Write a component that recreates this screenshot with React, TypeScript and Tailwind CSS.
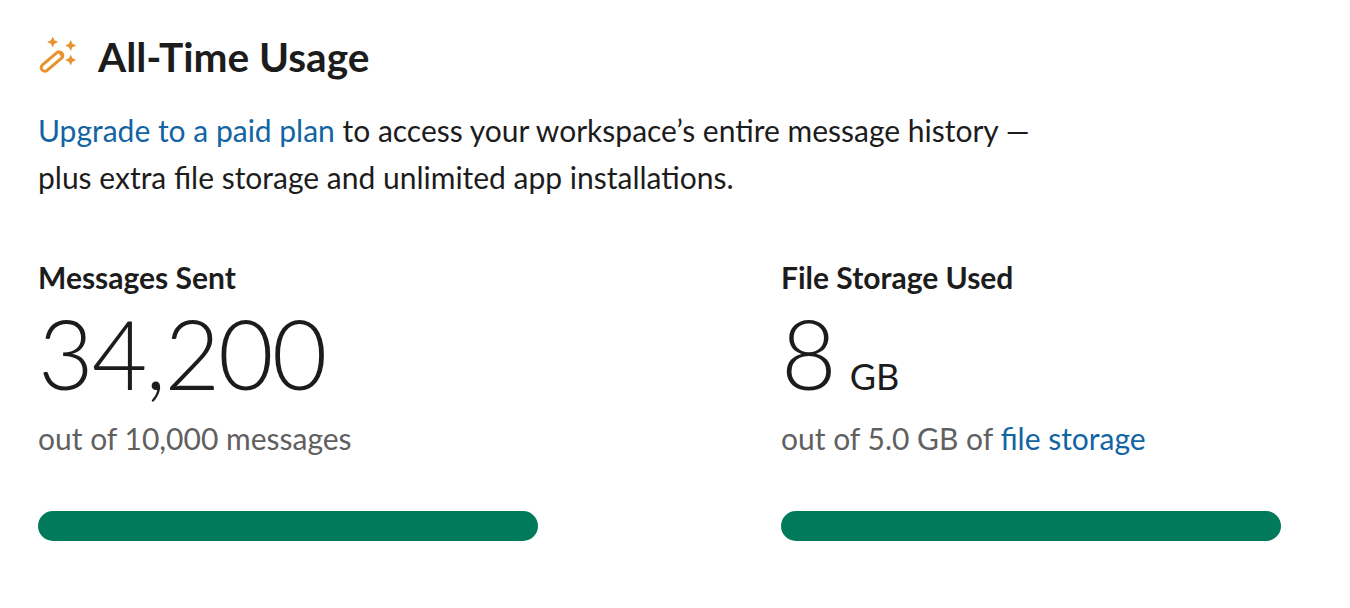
import * as React from 'react'

function WandIcon() {
  return (
    <svg width="40" height="40" viewBox="0 0 40 40" fill="none" className="shrink-0">
      <rect x="-3.6" y="-13" width="7.2" height="26" rx="3.6" transform="translate(14 24.5) rotate(50)" stroke="#e8912d" strokeWidth="3" />
      <path d="M21.5 16 L25.5 20.5" stroke="#e8912d" strokeWidth="2.4" />
      <g fill="#e8912d">
        <path d="M14.7 -0.5 L16.4 3.3 L20.2 5 L16.4 6.7 L14.7 10.5 L13 6.7 L9.2 5 L13 3.3 Z" />
        <path d="M32.7 3 L34.4 6.8 L38.2 8.5 L34.4 10.2 L32.7 14 L31 10.2 L27.2 8.5 L31 6.8 Z" />
        <path d="M32.7 17.5 L34.4 21.3 L38.2 23 L34.4 24.7 L32.7 28.5 L31 24.7 L27.2 23 L31 21.3 Z" />
      </g>
    </svg>
  )
}

function Stat({
  label,
  value,
  unit,
  children,
}: {
  label: string
  value: string
  unit?: string
  children: React.ReactNode
}) {
  return (
    <div className="w-[500px]">
      <div className="text-[30px] leading-[34px] font-bold text-[#1d1c1d]">{label}</div>
      <div className="mt-[15px] flex items-baseline h-[87px] leading-[87px] text-[#1d1c1d]">
        <span className="text-[96px] font-light tracking-[-2px]">{value}</span>
        {unit && <span className="ml-[15px] text-[36px] font-normal">{unit}</span>}
      </div>
      <div className="mt-[23px] text-[30px] leading-[38px] text-[#616061]">{children}</div>
      <div className="mt-[54px] h-[30px] rounded-full bg-[#007a5a]" />
    </div>
  )
}

export default function App() {
  return (
    <div className="w-[1350px] h-[608px] bg-white pl-[38px] pt-[37px] font-['Lato','Open_Sans',sans-serif] overflow-hidden">
      <div className="flex items-center gap-5 h-[40px]">
        <WandIcon />
        <h1 className="text-[40.6px] font-bold text-[#1d1c1d] leading-[40px]">All-Time Usage</h1>
      </div>
      <p className="mt-[30px] text-[30px] leading-[47px] text-[#1d1c1d] w-[1100px]">
        <a className="text-[#1264a3]">Upgrade to a paid plan</a> to access your workspace’s entire message history —
        <br />
        plus extra file storage and unlimited app installations.
      </p>
      <div className="mt-[59px] flex gap-[243px]">
        <Stat label="Messages Sent" value="34,200">
          out of 10,000 messages
        </Stat>
        <Stat label="File Storage Used" value="8" unit="GB">
          out of 5.0 GB of <a className="text-[#1264a3]">file storage</a>
        </Stat>
      </div>
    </div>
  )
}
